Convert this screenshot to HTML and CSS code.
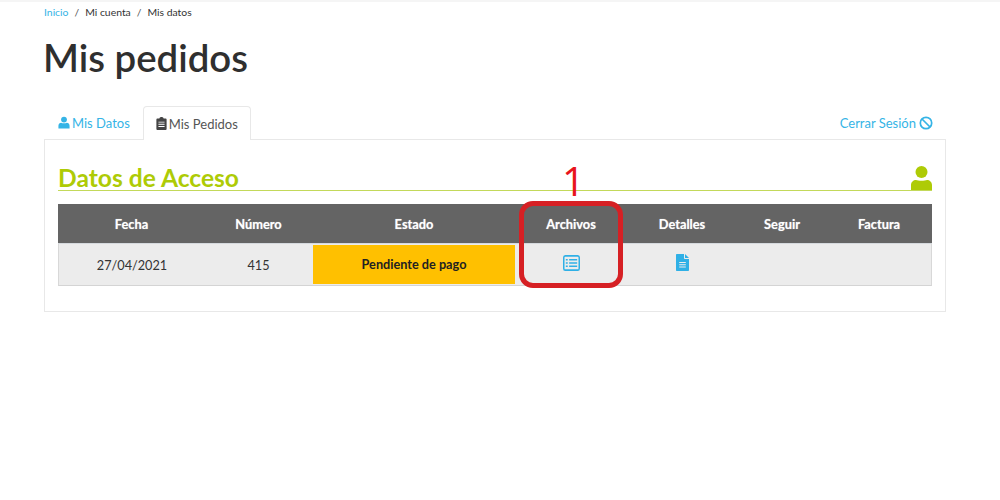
FILE: index.html
```html
<!DOCTYPE html>
<html lang="es">
<head>
    <meta charset="UTF-8">
    <title>Mis pedidos</title>
    <link rel="stylesheet" href="styles.css">
</head>
<body>
    <div class="top-strip"></div>
    <div class="container">
        <div class="breadcrumb">
            <a href="#">Inicio</a><span class="sep">/</span><span>Mi cuenta</span><span class="sep">/</span><span>Mis datos</span>
        </div>
        <h1>Mis pedidos</h1>

        <div class="tabs">
            <a class="tab" href="#">
                <svg class="icon" viewBox="0 0 14 14"><circle cx="7" cy="3.6" r="3.4"/><path d="M0.5 14V10.8C0.5 8.8 2 7.4 3.8 7.4C5 8.2 9 8.2 10.2 7.4C12 7.4 13.5 8.8 13.5 10.8V14Z"/></svg>
                Mis Datos
            </a>
            <a class="tab active" href="#">
                <svg class="icon icon-clip" viewBox="0 0 11 14"><path fill-rule="evenodd" d="M1 1.6H3.2C3.4 0.6 4.3 0 5.5 0S7.6 0.6 7.8 1.6H10C10.6 1.6 11 2 11 2.6V13C11 13.6 10.6 14 10 14H1C0.4 14 0 13.6 0 13V2.6C0 2 0.4 1.6 1 1.6ZM2.2 5V6H8.8V5ZM2.2 7.4V8.4H8.8V7.4ZM2.2 9.8V10.8H8.8V9.8Z"/></svg>
                Mis Pedidos
            </a>
            <a class="logout" href="#">
                Cerrar Sesión
                <svg class="icon-ban" viewBox="0 0 14 14"><circle cx="7" cy="7" r="5.7"/><path d="M3 3L11 11"/></svg>
            </a>
        </div>

        <div class="panel">
            <div class="panel-title">
                <h2>Datos de Acceso</h2>
                <svg class="title-user" viewBox="0 0 21 24"><circle cx="10.5" cy="6" r="6"/><path d="M0 24V19C0 16 2.5 14 5 14C7 15 14 15 16 14C18.5 14 21 16 21 19V24Z"/></svg>
            </div>

            <table class="orders">
                <colgroup>
                    <col class="c-fecha"><col class="c-numero"><col class="c-estado"><col class="c-archivos"><col class="c-detalles"><col class="c-seguir"><col class="c-factura">
                </colgroup>
                <thead>
                    <tr>
                        <th>Fecha</th>
                        <th>Número</th>
                        <th>Estado</th>
                        <th>Archivos</th>
                        <th>Detalles</th>
                        <th>Seguir</th>
                        <th>Factura</th>
                    </tr>
                </thead>
                <tbody>
                    <tr>
                        <td>27/04/2021</td>
                        <td>415</td>
                        <td class="status-cell"><div class="status">Pendiente de pago</div></td>
                        <td>
                            <svg class="row-icon icon-list" viewBox="0 0 18 15" preserveAspectRatio="none">
                                <rect class="frame" x="0.8" y="0.8" width="16.4" height="13.4" rx="1.6"/>
                                <path d="M3 4.5H5M6.5 4.5H15M3 7.5H5M6.5 7.5H15M3 10.5H5M6.5 10.5H15"/>
                            </svg>
                        </td>
                        <td>
                            <svg class="row-icon icon-file" viewBox="0 0 13 17"><path fill-rule="evenodd" d="M1 0H8V4.2C8 4.7 8.3 5 8.8 5H13V16C13 16.6 12.6 17 12 17H1C0.4 17 0 16.6 0 16V1C0 0.4 0.4 0 1 0ZM9 0L13 4H9ZM3.2 8V9H9.8V8ZM3.2 10.2V11.2H9.8V10.2ZM3.2 12.4V13.4H9.8V12.4Z"/></svg>
                        </td>
                        <td></td>
                        <td></td>
                    </tr>
                </tbody>
            </table>
        </div>
    </div>

    <!-- marca del tutorial encima de la captura -->
    <div class="callout-box"></div>
    <div class="callout-num">1</div>
</body>
</html>
```

FILE: styles.css
```css
body {
    margin: 0;
    font-family: Lato, sans-serif;
    font-size: 13px;
    color: #333;
    background: #fff;
    height: 500px;
    overflow: hidden;
    position: relative;
}
a {
    color: #35b4e6;
    text-decoration: none;
}
.top-strip {
    height: 2px;
    background: #f5f5f5;
}
.container {
    width: 902px;
    margin-left: 44px;
}
.breadcrumb {
    font-size: 10.4px;
    line-height: 14px;
    margin-top: 3px;
    color: #333;
}
.breadcrumb .sep {
    margin: 0 6px;
    color: #555;
}
h1 {
    font-size: 38.4px;
    font-weight: 600;
    line-height: 48px;
    margin: 14px 0 0 -1px;
    color: #2f2f2f;
}
.tabs {
    display: flex;
    align-items: center;
    height: 34px;
    margin-top: 24px;
    padding-left: 1px;
    position: relative;
}
.tab {
    display: flex;
    align-items: center;
    gap: 2px;
    height: 34px;
    box-sizing: border-box;
    padding: 1px 13px 0;
}
.tab.active {
    color: #555;
    background: #fff;
    border: 1px solid #e8e8e8;
    border-bottom: none;
    border-radius: 4px 4px 0 0;
    height: 34px;
    padding: 0 12px;
    align-self: flex-end;
    margin-bottom: -1px;
    position: relative;
    z-index: 1;
}
.icon {
    width: 12px;
    height: 13px;
    fill: #35b4e6;
}
.icon-clip {
    width: 11px;
    fill: #444;
}
.logout {
    margin-left: auto;
    margin-right: 13px;
    padding-top: 2px;
    display: flex;
    align-items: center;
    gap: 3px;
}
.icon-ban {
    width: 14px;
    height: 14px;
    fill: none;
    stroke: #35b4e6;
    stroke-width: 1.7;
}
.panel {
    border: 1px solid #e8e8e8;
    height: 171px;
    padding: 0 13px;
}
.panel-title {
    display: flex;
    justify-content: space-between;
    align-items: flex-end;
    height: 50px;
    border-bottom: 1px solid #c3d95a;
}
h2 {
    font-size: 24.6px;
    font-weight: 700;
    line-height: 30px;
    margin: 0 0 -3px;
    color: #aecb06;
}
.title-user {
    width: 21px;
    height: 24px;
    fill: #aecb06;
}
.orders {
    width: 100%;
    margin-top: 13px;
    border-collapse: separate;
    border-spacing: 0;
    table-layout: fixed;
}
.c-fecha { width: 147px; }
.c-numero { width: 107px; }
.c-estado { width: 204px; }
.c-archivos { width: 110px; }
.c-detalles { width: 112px; }
.c-seguir { width: 88px; }
.c-factura { width: 106px; }
.orders th {
    height: 39px;
    padding: 0;
    background: #646464;
    color: #fff;
    font-size: 12.8px;
    font-weight: 700;
    text-align: center;
    text-shadow: 0 0 1px rgba(255, 255, 255, 0.6);
    border-bottom: 1px solid #d5d9dd;
}
.orders td {
    height: 40px;
    padding: 0;
    background: #ececec;
    text-align: center;
    font-size: 12.7px;
    color: #333;
    border-bottom: 1px solid #d4d4d4;
}
.orders tr td:first-child {
    border-left: 1px solid #d8d8d8;
}
.orders tr td:last-child {
    border-right: 1px solid #d8d8d8;
}
.orders td.status-cell {
    padding: 1px 1px 0;
    vertical-align: top;
}
.status {
    height: 39px;
    line-height: 38px;
    background: #ffc000;
    color: #222;
    font-weight: 700;
}
.row-icon {
    display: block;
    margin: 0 auto 4px;
}
.icon-list {
    width: 17px;
    height: 16px;
    fill: none;
    stroke: #2fb0e6;
    stroke-width: 1.3;
}
.icon-list .frame {
    stroke-width: 1.6;
}
.icon-file {
    width: 13px;
    height: 17px;
    fill: #2fb0e6;
}
.callout-box {
    position: absolute;
    left: 519px;
    top: 201px;
    width: 94px;
    height: 77px;
    border: 5px solid #d62024;
    border-radius: 14px;
}
.callout-num {
    position: absolute;
    left: 562px;
    top: 157px;
    font-family: "Open Sans", sans-serif;
    font-size: 40px;
    font-weight: 500;
    line-height: 48px;
    color: #e8141c;
}
```
